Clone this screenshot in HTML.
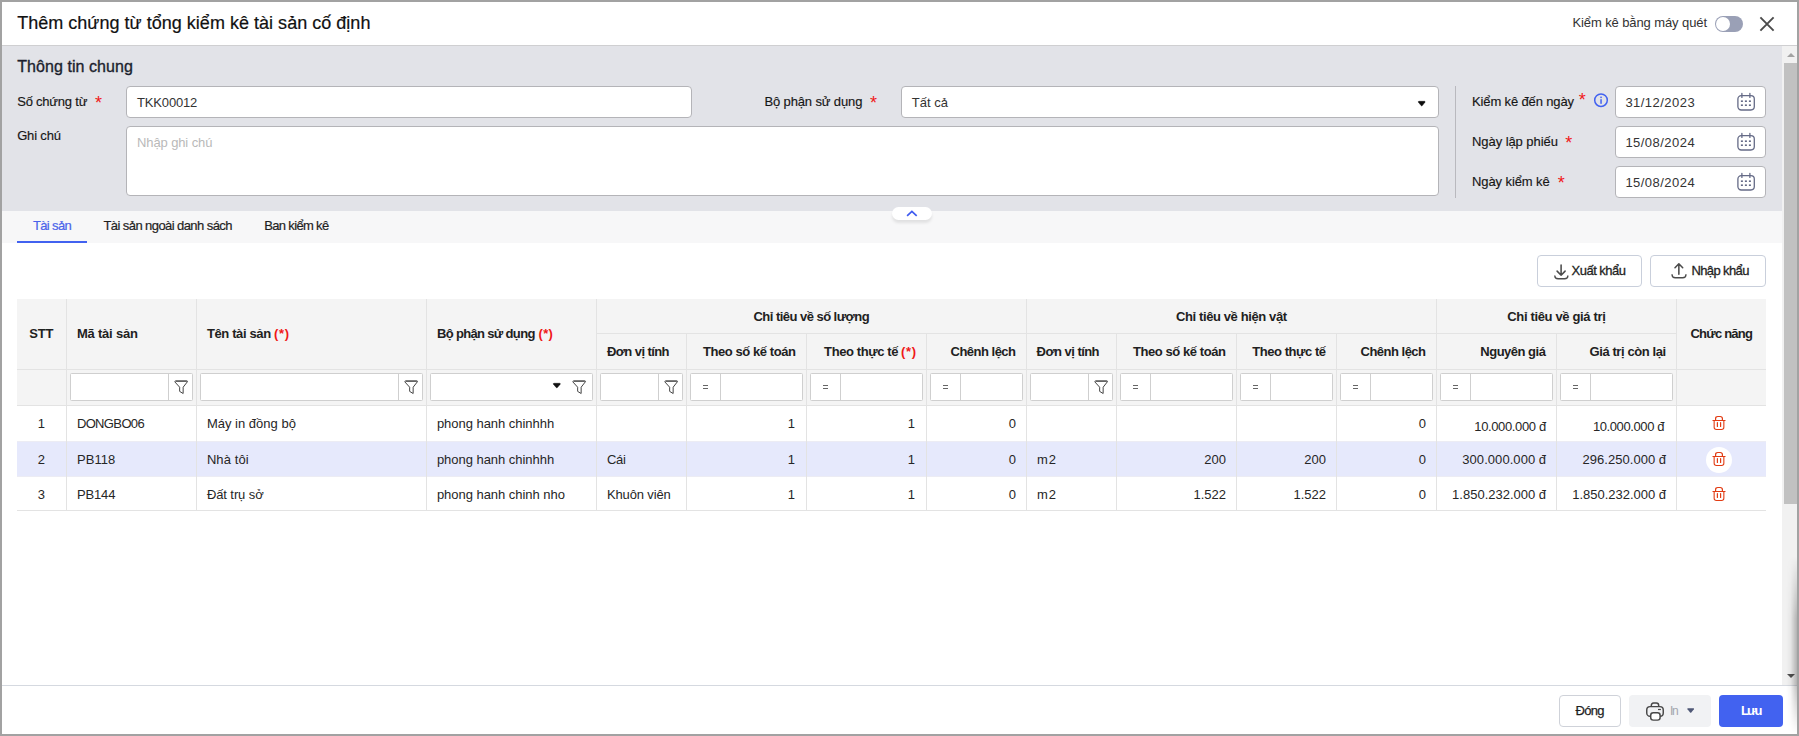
<!DOCTYPE html>
<html lang="vi">
<head>
<meta charset="utf-8">
<title>Thêm chứng từ tổng kiểm kê tài sản cố định</title>
<style>
*{box-sizing:border-box;margin:0;padding:0}
html,body{width:1799px;height:736px;overflow:hidden;background:#fff}
body{font-family:"Liberation Sans",sans-serif;font-size:13px;color:#212121;position:relative}
.abs,.t{position:absolute}
.t{white-space:nowrap;line-height:20px;height:20px}
.inp{position:absolute;background:#fff;border:1px solid #b4b4b8;border-radius:4px}
.flt{position:absolute;background:#fff;border:1px solid #cfcfcf;border-radius:1.5px}
.btn{position:absolute;background:#fff;border:1px solid #c9cfdb;border-radius:4px}
svg{overflow:visible}
</style>
</head>
<body>

<div class="abs" style="left:2px;top:2px;width:1795px;height:43px;background:#fff"></div>
<div class="abs" style="left:2px;top:45px;width:1780px;height:166px;background:#e2e3e8"></div>
<div class="abs" style="left:2px;top:211px;width:1780px;height:32px;background:#f7f7f8"></div>
<div class="abs" style="left:1782px;top:45px;width:15px;height:640px;background:#f1f1f1"></div>
<div class="abs" style="left:1784px;top:63px;width:13px;height:441px;background:#c1c1c1"></div>
<svg class="abs" style="left:1786.7px;top:53px;" width="8" height="4" viewBox="0 0 8 4"><path d="M0 4 L4 0 L8 4 Z" fill="#a3a3a3"/></svg>
<svg class="abs" style="left:1786.7px;top:674px;" width="8" height="4" viewBox="0 0 8 4"><path d="M0 0 L4 4 L8 0 Z" fill="#505050"/></svg>
<div class="abs" style="left:2px;top:685px;width:1795px;height:1px;background:#d5d9e0"></div>
<div class="abs" style="left:2px;top:45px;width:1795px;height:1px;background:#cfcfd1"></div>
<span class="t" style="left:17.20px;top:13.00px;font-size:18px;color:#111;letter-spacing:0.023px;-webkit-text-stroke:0.2px #111;">Thêm chứng từ tổng kiểm kê tài sản cố định</span>
<span class="t" style="left:1572.40px;top:12.50px;font-size:13px;color:#333;letter-spacing:-0.096px;">Kiểm kê bằng máy quét</span>
<div class="abs" style="left:1715px;top:16px;width:28px;height:16px;background:#9aa0b6;border-radius:8px"></div>
<div class="abs" style="left:1716px;top:17px;width:14px;height:14px;background:#fff;border-radius:7px"></div>
<svg class="abs" style="left:1760px;top:17px;" width="14" height="14" viewBox="0 0 14 14"><path d="M0.4 0.4 L13.6 13.6 M13.6 0.4 L0.4 13.6" stroke="#4b4b4b" stroke-width="1.9" fill="none"/></svg>
<span class="t" style="left:17.20px;top:57.00px;font-size:16px;color:#1c1f2e;letter-spacing:0.068px;-webkit-text-stroke:0.35px #1c1f2e;">Thông tin chung</span>
<span class="t" style="left:17.20px;top:91.80px;font-size:13px;color:#161616;letter-spacing:-0.217px;-webkit-text-stroke:0.15px #161616;">Số chứng từ</span>
<span class="t" style="left:94.90px;top:93.38px;font-size:18px;color:#f01818;">*</span>
<div class="inp" style="left:126px;top:86px;width:566px;height:32px"></div>
<span class="t" style="left:137.00px;top:92.50px;font-size:13px;color:#333;letter-spacing:-0.157px;">TKK00012</span>
<span class="t" style="left:17.20px;top:125.50px;font-size:13px;color:#161616;letter-spacing:-0.175px;-webkit-text-stroke:0.15px #161616;">Ghi chú</span>
<div class="inp" style="left:126px;top:126px;width:1313px;height:70px"></div>
<span class="t" style="left:137.00px;top:132.50px;font-size:13px;color:#b9b9b9;letter-spacing:-0.111px;">Nhập ghi chú</span>
<span class="t" style="left:764.40px;top:91.80px;font-size:13px;color:#161616;letter-spacing:-0.125px;-webkit-text-stroke:0.15px #161616;">Bộ phận sử dụng</span>
<span class="t" style="left:869.90px;top:93.38px;font-size:18px;color:#f01818;">*</span>
<div class="inp" style="left:901px;top:86px;width:538px;height:32px"></div>
<span class="t" style="left:911.70px;top:92.50px;font-size:13px;color:#333;letter-spacing:0.015px;">Tất cả</span>
<svg class="abs" style="left:1418px;top:100.9px;" width="7.4" height="5.2" viewBox="0 0 7.4 5.2"><path d="M0.9 0.3 H6.5 Q7.5 0.4 6.9 1.3 L4.3 4.6 Q3.7 5.2 3.1 4.6 L0.5 1.3 Q-0.1 0.4 0.9 0.3 Z" fill="#0c0c0c" stroke="#0c0c0c" stroke-width="0.5" stroke-linejoin="round"/></svg>
<div class="abs" style="left:1455px;top:86px;width:1px;height:112px;background:#b9b9be"></div>
<span class="t" style="left:1472.00px;top:91.80px;font-size:13px;color:#161616;letter-spacing:-0.135px;-webkit-text-stroke:0.15px #161616;">Kiểm kê đến ngày</span>
<span class="t" style="left:1578.80px;top:90.08px;font-size:18px;color:#f01818;">*</span>
<div class="inp" style="left:1615px;top:86px;width:151px;height:32px"></div>
<span class="t" style="left:1625.40px;top:92.50px;font-size:13px;color:#333;letter-spacing:0.464px;">31/12/2023</span>
<svg class="abs" style="left:1737px;top:93px;" width="18" height="18" viewBox="0 0 18 18"><rect x="0.9" y="2.7" width="16.4" height="14.3" rx="3.4" fill="none" stroke="#646a86" stroke-width="1.3"/><path d="M4.9 0.5 V4.4 M12.9 0.5 V4.4" stroke="#646a86" stroke-width="1.3" fill="none" stroke-linecap="round"/><g fill="#646a86"><rect x="3.9000000000000004" y="7.3999999999999995" width="2" height="1.6"/><rect x="7.9" y="7.3999999999999995" width="2" height="1.6"/><rect x="11.9" y="7.3999999999999995" width="2" height="1.6"/><rect x="3.9000000000000004" y="11.399999999999999" width="2" height="1.6"/><rect x="7.9" y="11.399999999999999" width="2" height="1.6"/><rect x="11.9" y="11.399999999999999" width="2" height="1.6"/></g></svg>
<span class="t" style="left:1472.00px;top:131.80px;font-size:13px;color:#161616;letter-spacing:-0.065px;-webkit-text-stroke:0.15px #161616;">Ngày lập phiếu</span>
<span class="t" style="left:1565.20px;top:133.07px;font-size:18px;color:#f01818;">*</span>
<div class="inp" style="left:1615px;top:126px;width:151px;height:32px"></div>
<span class="t" style="left:1625.40px;top:132.50px;font-size:13px;color:#333;letter-spacing:0.464px;">15/08/2024</span>
<svg class="abs" style="left:1737px;top:133px;" width="18" height="18" viewBox="0 0 18 18"><rect x="0.9" y="2.7" width="16.4" height="14.3" rx="3.4" fill="none" stroke="#646a86" stroke-width="1.3"/><path d="M4.9 0.5 V4.4 M12.9 0.5 V4.4" stroke="#646a86" stroke-width="1.3" fill="none" stroke-linecap="round"/><g fill="#646a86"><rect x="3.9000000000000004" y="7.3999999999999995" width="2" height="1.6"/><rect x="7.9" y="7.3999999999999995" width="2" height="1.6"/><rect x="11.9" y="7.3999999999999995" width="2" height="1.6"/><rect x="3.9000000000000004" y="11.399999999999999" width="2" height="1.6"/><rect x="7.9" y="11.399999999999999" width="2" height="1.6"/><rect x="11.9" y="11.399999999999999" width="2" height="1.6"/></g></svg>
<span class="t" style="left:1472.00px;top:171.80px;font-size:13px;color:#161616;letter-spacing:-0.095px;-webkit-text-stroke:0.15px #161616;">Ngày kiểm kê</span>
<span class="t" style="left:1557.70px;top:173.07px;font-size:18px;color:#f01818;">*</span>
<div class="inp" style="left:1615px;top:166px;width:151px;height:32px"></div>
<span class="t" style="left:1625.40px;top:172.50px;font-size:13px;color:#333;letter-spacing:0.464px;">15/08/2024</span>
<svg class="abs" style="left:1737px;top:173px;" width="18" height="18" viewBox="0 0 18 18"><rect x="0.9" y="2.7" width="16.4" height="14.3" rx="3.4" fill="none" stroke="#646a86" stroke-width="1.3"/><path d="M4.9 0.5 V4.4 M12.9 0.5 V4.4" stroke="#646a86" stroke-width="1.3" fill="none" stroke-linecap="round"/><g fill="#646a86"><rect x="3.9000000000000004" y="7.3999999999999995" width="2" height="1.6"/><rect x="7.9" y="7.3999999999999995" width="2" height="1.6"/><rect x="11.9" y="7.3999999999999995" width="2" height="1.6"/><rect x="3.9000000000000004" y="11.399999999999999" width="2" height="1.6"/><rect x="7.9" y="11.399999999999999" width="2" height="1.6"/><rect x="11.9" y="11.399999999999999" width="2" height="1.6"/></g></svg>
<svg class="abs" style="left:1594px;top:93px;" width="14" height="14" viewBox="0 0 14 14"><circle cx="7" cy="7.2" r="6.3" fill="none" stroke="#4262f0" stroke-width="1.5"/><rect x="6.3" y="6.2" width="1.5" height="4.6" fill="#4262f0"/><rect x="6.3" y="3.6" width="1.5" height="1.5" fill="#4262f0"/></svg>
<div class="abs" style="left:892px;top:206.6px;width:40px;height:13.4px;background:#fff;border-radius:6.7px;box-shadow:0 3px 3px rgba(0,0,0,.09)"></div>
<svg class="abs" style="left:906px;top:209.5px;" width="12" height="7" viewBox="0 0 12 7"><path d="M1.1 5.9 L5.9 1.4 L10.7 5.9" fill="none" stroke="#3f5bf0" stroke-width="1.7" stroke-linecap="butt" stroke-linejoin="miter"/></svg>
<span class="t" style="left:33.00px;top:216.00px;font-size:13px;color:#4a63ea;letter-spacing:-0.654px;-webkit-text-stroke:0.2px #4a63ea;">Tài sản</span>
<div class="abs" style="left:17px;top:241px;width:70px;height:2px;background:#4262f0"></div>
<span class="t" style="left:103.50px;top:216.00px;font-size:13px;color:#1f1f1f;letter-spacing:-0.578px;-webkit-text-stroke:0.2px #1f1f1f;">Tài sản ngoài danh sách</span>
<span class="t" style="left:264.30px;top:216.00px;font-size:13px;color:#1f1f1f;letter-spacing:-0.670px;-webkit-text-stroke:0.2px #1f1f1f;">Ban kiểm kê</span>
<div class="btn" style="left:1537px;top:255px;width:105px;height:32px"></div>
<svg class="abs" style="left:1554px;top:263.5px;" width="15" height="16" viewBox="0 0 15 16"><g fill="none" stroke="#4c4c4c" stroke-width="1.55" stroke-linecap="round" stroke-linejoin="round"><path d="M7.1 0.9 V11.2 M3.1 7.1 L7.1 11.3 L11.1 7.1"/><path d="M0.85 12 Q0.85 14.7 4.1 14.7 H10.6 Q13.85 14.7 13.85 12" stroke-width="1.35"/></g></svg>
<span class="t" style="left:1571.60px;top:260.50px;font-size:13px;color:#1f1f1f;letter-spacing:-0.525px;-webkit-text-stroke:0.3px #1f1f1f;">Xuất khẩu</span>
<div class="btn" style="left:1650px;top:255px;width:116px;height:32px"></div>
<svg class="abs" style="left:1671px;top:263px;" width="16" height="16" viewBox="0 0 16 16"><g fill="none" stroke="#4c4c4c" stroke-width="1.55" stroke-linecap="round" stroke-linejoin="round"><path d="M7.85 11.2 V0.9 M4 4.7 L7.85 0.8 L11.7 4.7"/><path d="M1.05 11.7 Q1.05 14.7 4.3 14.7 H11.7 Q14.95 14.7 14.95 11.7" stroke-width="1.35"/></g></svg>
<span class="t" style="left:1691.40px;top:260.50px;font-size:13px;color:#1f1f1f;letter-spacing:-0.609px;-webkit-text-stroke:0.3px #1f1f1f;">Nhập khẩu</span>
<div class="abs" style="left:17px;top:299px;width:1749px;height:106px;background:#f4f4f4"></div>
<div class="abs" style="left:17px;top:441px;width:1749px;height:36px;background:#e6e9fc;border-top:1px solid #ececf4;border-bottom:1px solid #ececf4"></div>
<div class="abs" style="left:596px;top:333px;width:1080px;height:1px;background:#e3e3e3"></div>
<div class="abs" style="left:17px;top:369px;width:1749px;height:1px;background:#e3e3e3"></div>
<div class="abs" style="left:17px;top:405px;width:1749px;height:1px;background:#e3e3e3"></div>
<div class="abs" style="left:17px;top:510px;width:1749px;height:1px;background:#e3e3e3"></div>
<div class="abs" style="left:66px;top:299px;width:1px;height:212px;background:#e3e3e3"></div>
<div class="abs" style="left:196px;top:299px;width:1px;height:212px;background:#e3e3e3"></div>
<div class="abs" style="left:426px;top:299px;width:1px;height:212px;background:#e3e3e3"></div>
<div class="abs" style="left:596px;top:299px;width:1px;height:212px;background:#e3e3e3"></div>
<div class="abs" style="left:686px;top:333px;width:1px;height:178px;background:#e3e3e3"></div>
<div class="abs" style="left:806px;top:333px;width:1px;height:178px;background:#e3e3e3"></div>
<div class="abs" style="left:926px;top:333px;width:1px;height:178px;background:#e3e3e3"></div>
<div class="abs" style="left:1026px;top:299px;width:1px;height:212px;background:#e3e3e3"></div>
<div class="abs" style="left:1116px;top:333px;width:1px;height:178px;background:#e3e3e3"></div>
<div class="abs" style="left:1236px;top:333px;width:1px;height:178px;background:#e3e3e3"></div>
<div class="abs" style="left:1336px;top:333px;width:1px;height:178px;background:#e3e3e3"></div>
<div class="abs" style="left:1436px;top:299px;width:1px;height:212px;background:#e3e3e3"></div>
<div class="abs" style="left:1556px;top:333px;width:1px;height:178px;background:#e3e3e3"></div>
<div class="abs" style="left:1676px;top:299px;width:1px;height:212px;background:#e3e3e3"></div>
<span class="t" style="left:29.30px;top:323.50px;font-size:13px;color:#212121;font-weight:700;letter-spacing:-0.200px;">STT</span>
<span class="t" style="left:76.90px;top:323.50px;font-size:13px;color:#212121;font-weight:700;letter-spacing:-0.208px;">Mã tài sản</span>
<span class="t" style="left:206.90px;top:323.50px;font-size:13px;color:#212121;font-weight:700;letter-spacing:-0.368px;">Tên tài sản</span>
<span class="t" style="left:274.10px;top:323.50px;font-size:13px;color:#f01818;font-weight:700;letter-spacing:0.625px;">(*)</span>
<span class="t" style="left:436.90px;top:323.50px;font-size:13px;color:#212121;font-weight:700;letter-spacing:-0.652px;">Bộ phận sử dụng</span>
<span class="t" style="left:538.60px;top:323.50px;font-size:13px;color:#f01818;font-weight:700;letter-spacing:0.275px;">(*)</span>
<span class="t" style="left:753.50px;top:306.80px;font-size:13px;color:#212121;font-weight:700;letter-spacing:-0.534px;">Chỉ tiêu về số lượng</span>
<span class="t" style="left:1176.00px;top:306.80px;font-size:13px;color:#212121;font-weight:700;letter-spacing:-0.389px;">Chỉ tiêu về hiện vật</span>
<span class="t" style="left:1507.30px;top:306.80px;font-size:13px;color:#212121;font-weight:700;letter-spacing:-0.347px;">Chỉ tiêu về giá trị</span>
<span class="t" style="left:1690.50px;top:323.50px;font-size:13px;color:#212121;font-weight:700;letter-spacing:-0.778px;">Chức năng</span>
<span class="t" style="left:606.90px;top:341.80px;font-size:13px;color:#212121;font-weight:700;letter-spacing:-0.580px;">Đơn vị tính</span>
<span class="t" style="left:702.90px;top:341.80px;font-size:13px;color:#212121;font-weight:700;letter-spacing:-0.414px;">Theo số kế toán</span>
<span class="t" style="left:824.10px;top:341.80px;font-size:13px;color:#212121;font-weight:700;letter-spacing:-0.405px;">Theo thực tế</span>
<span class="t" style="left:901.10px;top:341.80px;font-size:13px;color:#f01818;font-weight:700;letter-spacing:0.625px;">(*)</span>
<span class="t" style="left:950.50px;top:341.80px;font-size:13px;color:#212121;font-weight:700;letter-spacing:-0.503px;">Chênh lệch</span>
<span class="t" style="left:1036.60px;top:341.80px;font-size:13px;color:#212121;font-weight:700;letter-spacing:-0.550px;">Đơn vị tính</span>
<span class="t" style="left:1132.90px;top:341.80px;font-size:13px;color:#212121;font-weight:700;letter-spacing:-0.414px;">Theo số kế toán</span>
<span class="t" style="left:1252.30px;top:341.80px;font-size:13px;color:#212121;font-weight:700;letter-spacing:-0.450px;">Theo thực tế</span>
<span class="t" style="left:1360.50px;top:341.80px;font-size:13px;color:#212121;font-weight:700;letter-spacing:-0.503px;">Chênh lệch</span>
<span class="t" style="left:1480.30px;top:341.80px;font-size:13px;color:#212121;font-weight:700;letter-spacing:-0.494px;">Nguyên giá</span>
<span class="t" style="left:1589.50px;top:341.80px;font-size:13px;color:#212121;font-weight:700;letter-spacing:-0.412px;">Giá trị còn lại</span>
<div class="flt" style="left:70px;top:373px;width:123px;height:28px"></div>
<div class="abs" style="left:168px;top:374px;width:1px;height:26px;background:#cfcfcf"></div>
<svg class="abs" style="left:174.3px;top:379.8px;" width="14" height="14" viewBox="0 0 14 14"><path d="M1.7 0.9 H12.9 Q13.9 1 13.3 1.9 L9.15 7.2 V13.5 L5.65 11.4 V7.2 L0.95 2 Q0.5 1 1.7 0.9 Z" fill="none" stroke="#454545" stroke-width="1" stroke-linejoin="round"/><path d="M2 1.3 H12.8" fill="none" stroke="#454545" stroke-width="0.9"/></svg>
<div class="flt" style="left:200px;top:373px;width:223px;height:28px"></div>
<div class="abs" style="left:398px;top:374px;width:1px;height:26px;background:#cfcfcf"></div>
<svg class="abs" style="left:404.3px;top:379.8px;" width="14" height="14" viewBox="0 0 14 14"><path d="M1.7 0.9 H12.9 Q13.9 1 13.3 1.9 L9.15 7.2 V13.5 L5.65 11.4 V7.2 L0.95 2 Q0.5 1 1.7 0.9 Z" fill="none" stroke="#454545" stroke-width="1" stroke-linejoin="round"/><path d="M2 1.3 H12.8" fill="none" stroke="#454545" stroke-width="0.9"/></svg>
<div class="flt" style="left:430px;top:373px;width:163px;height:28px"></div>
<svg class="abs" style="left:572.3px;top:379.8px;" width="14" height="14" viewBox="0 0 14 14"><path d="M1.7 0.9 H12.9 Q13.9 1 13.3 1.9 L9.15 7.2 V13.5 L5.65 11.4 V7.2 L0.95 2 Q0.5 1 1.7 0.9 Z" fill="none" stroke="#454545" stroke-width="1" stroke-linejoin="round"/><path d="M2 1.3 H12.8" fill="none" stroke="#454545" stroke-width="0.9"/></svg>
<svg class="abs" style="left:552.6px;top:382.9px;" width="7.6" height="5" viewBox="0 0 7.6 5"><path d="M0.9 0.3 H6.7 Q7.7 0.4 7.1 1.3 L4.4 4.5 Q3.8 5 3.2 4.5 L0.5 1.3 Q-0.1 0.4 0.9 0.3 Z" fill="#111" stroke="#111" stroke-width="0.5" stroke-linejoin="round"/></svg>
<div class="flt" style="left:600px;top:373px;width:83px;height:28px"></div>
<div class="abs" style="left:658px;top:374px;width:1px;height:26px;background:#cfcfcf"></div>
<svg class="abs" style="left:664.3px;top:379.8px;" width="14" height="14" viewBox="0 0 14 14"><path d="M1.7 0.9 H12.9 Q13.9 1 13.3 1.9 L9.15 7.2 V13.5 L5.65 11.4 V7.2 L0.95 2 Q0.5 1 1.7 0.9 Z" fill="none" stroke="#454545" stroke-width="1" stroke-linejoin="round"/><path d="M2 1.3 H12.8" fill="none" stroke="#454545" stroke-width="0.9"/></svg>
<div class="flt" style="left:690px;top:373px;width:113px;height:28px"></div>
<div class="abs" style="left:720px;top:374px;width:1px;height:26px;background:#cfcfcf"></div>
<div class="abs" style="left:702.8px;top:385.0px;width:5.7px;height:1px;background:#666"></div>
<div class="abs" style="left:702.8px;top:387.6px;width:5.7px;height:1px;background:#666"></div>
<div class="flt" style="left:810px;top:373px;width:113px;height:28px"></div>
<div class="abs" style="left:840px;top:374px;width:1px;height:26px;background:#cfcfcf"></div>
<div class="abs" style="left:822.8px;top:385.0px;width:5.7px;height:1px;background:#666"></div>
<div class="abs" style="left:822.8px;top:387.6px;width:5.7px;height:1px;background:#666"></div>
<div class="flt" style="left:930px;top:373px;width:93px;height:28px"></div>
<div class="abs" style="left:960px;top:374px;width:1px;height:26px;background:#cfcfcf"></div>
<div class="abs" style="left:942.8px;top:385.0px;width:5.7px;height:1px;background:#666"></div>
<div class="abs" style="left:942.8px;top:387.6px;width:5.7px;height:1px;background:#666"></div>
<div class="flt" style="left:1030px;top:373px;width:83px;height:28px"></div>
<div class="abs" style="left:1088px;top:374px;width:1px;height:26px;background:#cfcfcf"></div>
<svg class="abs" style="left:1094.3px;top:379.8px;" width="14" height="14" viewBox="0 0 14 14"><path d="M1.7 0.9 H12.9 Q13.9 1 13.3 1.9 L9.15 7.2 V13.5 L5.65 11.4 V7.2 L0.95 2 Q0.5 1 1.7 0.9 Z" fill="none" stroke="#454545" stroke-width="1" stroke-linejoin="round"/><path d="M2 1.3 H12.8" fill="none" stroke="#454545" stroke-width="0.9"/></svg>
<div class="flt" style="left:1120px;top:373px;width:113px;height:28px"></div>
<div class="abs" style="left:1150px;top:374px;width:1px;height:26px;background:#cfcfcf"></div>
<div class="abs" style="left:1132.8px;top:385.0px;width:5.7px;height:1px;background:#666"></div>
<div class="abs" style="left:1132.8px;top:387.6px;width:5.7px;height:1px;background:#666"></div>
<div class="flt" style="left:1240px;top:373px;width:93px;height:28px"></div>
<div class="abs" style="left:1270px;top:374px;width:1px;height:26px;background:#cfcfcf"></div>
<div class="abs" style="left:1252.8px;top:385.0px;width:5.7px;height:1px;background:#666"></div>
<div class="abs" style="left:1252.8px;top:387.6px;width:5.7px;height:1px;background:#666"></div>
<div class="flt" style="left:1340px;top:373px;width:93px;height:28px"></div>
<div class="abs" style="left:1370px;top:374px;width:1px;height:26px;background:#cfcfcf"></div>
<div class="abs" style="left:1352.8px;top:385.0px;width:5.7px;height:1px;background:#666"></div>
<div class="abs" style="left:1352.8px;top:387.6px;width:5.7px;height:1px;background:#666"></div>
<div class="flt" style="left:1440px;top:373px;width:113px;height:28px"></div>
<div class="abs" style="left:1470px;top:374px;width:1px;height:26px;background:#cfcfcf"></div>
<div class="abs" style="left:1452.8px;top:385.0px;width:5.7px;height:1px;background:#666"></div>
<div class="abs" style="left:1452.8px;top:387.6px;width:5.7px;height:1px;background:#666"></div>
<div class="flt" style="left:1560px;top:373px;width:113px;height:28px"></div>
<div class="abs" style="left:1590px;top:374px;width:1px;height:26px;background:#cfcfcf"></div>
<div class="abs" style="left:1572.8px;top:385.0px;width:5.7px;height:1px;background:#666"></div>
<div class="abs" style="left:1572.8px;top:387.6px;width:5.7px;height:1px;background:#666"></div>
<span class="t" style="left:37.67px;top:413.50px;font-size:13px;color:#262626;">1</span>
<span class="t" style="left:76.90px;top:413.50px;font-size:13px;color:#262626;letter-spacing:-0.636px;">DONGBO06</span>
<span class="t" style="left:206.90px;top:413.50px;font-size:13px;color:#262626;letter-spacing:0.010px;">Máy in đồng bộ</span>
<span class="t" style="left:436.90px;top:413.50px;font-size:13px;color:#262626;letter-spacing:-0.034px;">phong hanh chinhhh</span>
<span class="t" style="left:787.75px;top:413.50px;font-size:13px;color:#262626;">1</span>
<span class="t" style="left:907.75px;top:413.50px;font-size:13px;color:#262626;">1</span>
<span class="t" style="left:1008.65px;top:413.50px;font-size:13px;color:#262626;">0</span>
<span class="t" style="left:1418.65px;top:413.50px;font-size:13px;color:#262626;">0</span>
<span class="t" style="left:1474.30px;top:416.80px;font-size:13px;color:#262626;letter-spacing:-0.370px;">10.000.000 đ</span>
<span class="t" style="left:1592.90px;top:416.80px;font-size:13px;color:#262626;letter-spacing:-0.398px;">10.000.000 đ</span>
<span class="t" style="left:37.67px;top:449.90px;font-size:13px;color:#262626;">2</span>
<span class="t" style="left:76.90px;top:449.90px;font-size:13px;color:#262626;letter-spacing:0.094px;">PB118</span>
<span class="t" style="left:206.90px;top:449.90px;font-size:13px;color:#262626;letter-spacing:0.092px;">Nhà tôi</span>
<span class="t" style="left:436.90px;top:449.90px;font-size:13px;color:#262626;letter-spacing:-0.034px;">phong hanh chinhhh</span>
<span class="t" style="left:607.00px;top:449.90px;font-size:13px;color:#262626;letter-spacing:-0.350px;">Cái</span>
<span class="t" style="left:787.75px;top:449.90px;font-size:13px;color:#262626;">1</span>
<span class="t" style="left:907.75px;top:449.90px;font-size:13px;color:#262626;">1</span>
<span class="t" style="left:1008.65px;top:449.90px;font-size:13px;color:#262626;">0</span>
<span class="t" style="left:1036.90px;top:449.90px;font-size:13px;color:#262626;letter-spacing:1.000px;">m2</span>
<span class="t" style="left:1204.25px;top:449.90px;font-size:13px;color:#262626;">200</span>
<span class="t" style="left:1304.25px;top:449.90px;font-size:13px;color:#262626;">200</span>
<span class="t" style="left:1418.65px;top:449.90px;font-size:13px;color:#262626;">0</span>
<span class="t" style="left:1462.30px;top:449.90px;font-size:13px;color:#262626;letter-spacing:0.056px;">300.000.000 đ</span>
<span class="t" style="left:1582.40px;top:449.90px;font-size:13px;color:#262626;letter-spacing:0.048px;">296.250.000 đ</span>
<span class="t" style="left:37.67px;top:484.50px;font-size:13px;color:#262626;">3</span>
<span class="t" style="left:76.90px;top:484.50px;font-size:13px;color:#262626;letter-spacing:-0.125px;">PB144</span>
<span class="t" style="left:206.90px;top:484.50px;font-size:13px;color:#262626;letter-spacing:-0.092px;">Đất trụ sở</span>
<span class="t" style="left:436.90px;top:484.50px;font-size:13px;color:#262626;letter-spacing:-0.033px;">phong hanh chinh nho</span>
<span class="t" style="left:607.00px;top:484.50px;font-size:13px;color:#262626;letter-spacing:-0.144px;">Khuôn viên</span>
<span class="t" style="left:787.75px;top:484.50px;font-size:13px;color:#262626;">1</span>
<span class="t" style="left:907.75px;top:484.50px;font-size:13px;color:#262626;">1</span>
<span class="t" style="left:1008.65px;top:484.50px;font-size:13px;color:#262626;">0</span>
<span class="t" style="left:1036.90px;top:484.50px;font-size:13px;color:#262626;letter-spacing:1.000px;">m2</span>
<span class="t" style="left:1193.50px;top:484.50px;font-size:13px;color:#262626;">1.522</span>
<span class="t" style="left:1293.50px;top:484.50px;font-size:13px;color:#262626;">1.522</span>
<span class="t" style="left:1418.65px;top:484.50px;font-size:13px;color:#262626;">0</span>
<span class="t" style="left:1452.10px;top:484.50px;font-size:13px;color:#262626;">1.850.232.000 đ</span>
<span class="t" style="left:1572.20px;top:484.50px;font-size:13px;color:#262626;letter-spacing:-0.007px;">1.850.232.000 đ</span>
<div class="abs" style="left:1706px;top:446.8px;width:26px;height:26px;background:#fff;border-radius:13px"></div>
<svg class="abs" style="left:1712px;top:415.1px;" width="14" height="15" viewBox="0 0 14 15"><g fill="none" stroke="#e23c14" stroke-width="1.2" stroke-linecap="round" stroke-linejoin="round"><path d="M0.5 5.5 H13.5" stroke-width="1.05" stroke-linecap="butt"/><path d="M3.6 5.4 V3.6 Q3.6 1.5 5.8 1.5 H8.2 Q10.4 1.5 10.4 3.6 V5.4"/><path d="M2.15 5.6 V12.3 Q2.15 14.45 4.45 14.45 H9.55 Q11.85 14.45 11.85 12.3 V5.6" stroke-width="1.1"/><path d="M5.4 7.6 V11.5 M8.6 7.6 V11.5"/></g></svg>
<svg class="abs" style="left:1712px;top:451.0px;" width="14" height="15" viewBox="0 0 14 15"><g fill="none" stroke="#e23c14" stroke-width="1.2" stroke-linecap="round" stroke-linejoin="round"><path d="M0.5 5.5 H13.5" stroke-width="1.05" stroke-linecap="butt"/><path d="M3.6 5.4 V3.6 Q3.6 1.5 5.8 1.5 H8.2 Q10.4 1.5 10.4 3.6 V5.4"/><path d="M2.15 5.6 V12.3 Q2.15 14.45 4.45 14.45 H9.55 Q11.85 14.45 11.85 12.3 V5.6" stroke-width="1.1"/><path d="M5.4 7.6 V11.5 M8.6 7.6 V11.5"/></g></svg>
<svg class="abs" style="left:1712px;top:486.3px;" width="14" height="15" viewBox="0 0 14 15"><g fill="none" stroke="#e23c14" stroke-width="1.2" stroke-linecap="round" stroke-linejoin="round"><path d="M0.5 5.5 H13.5" stroke-width="1.05" stroke-linecap="butt"/><path d="M3.6 5.4 V3.6 Q3.6 1.5 5.8 1.5 H8.2 Q10.4 1.5 10.4 3.6 V5.4"/><path d="M2.15 5.6 V12.3 Q2.15 14.45 4.45 14.45 H9.55 Q11.85 14.45 11.85 12.3 V5.6" stroke-width="1.1"/><path d="M5.4 7.6 V11.5 M8.6 7.6 V11.5"/></g></svg>
<div class="btn" style="left:1559px;top:695px;width:62px;height:32px;border-color:#cfd2d9"></div>
<span class="t" style="left:1575.50px;top:701.00px;font-size:13px;color:#1f1f1f;letter-spacing:-0.675px;-webkit-text-stroke:0.25px #1f1f1f;">Đóng</span>
<div class="abs" style="left:1629px;top:695px;width:82px;height:32px;background:#f1f2f4;border-radius:4px"></div>
<svg class="abs" style="left:1646px;top:702px;" width="18" height="19" viewBox="0 0 18 19"><g fill="none" stroke="#474747" stroke-width="1.45" stroke-linejoin="round"><path d="M5.3 4.5 V3.4 Q5.3 1.05 7.6 1.05 H10.4 Q12.7 1.05 12.7 3.4 V4.5"/><rect x="0.75" y="4.6" width="16.5" height="9.7" rx="3.3"/><rect x="4.7" y="10.8" width="9.4" height="7.3" rx="2.6" fill="#fff"/></g><rect x="12" y="6.9" width="2.9" height="1.2" fill="#474747"/></svg>
<span class="t" style="left:1670.00px;top:700.80px;font-size:12px;color:#a3a6ae;letter-spacing:-1.300px;">In</span>
<svg class="abs" style="left:1686.9px;top:708px;" width="7.4" height="5" viewBox="0 0 7.4 5"><path d="M0.9 0.3 H6.5 Q7.5 0.4 6.9 1.3 L4.3 4.5 Q3.7 5 3.1 4.5 L0.5 1.3 Q-0.1 0.4 0.9 0.3 Z" fill="#4f5876"/></svg>
<div class="abs" style="left:1719px;top:695px;width:64px;height:32px;background:#4262f0;border-radius:4px"></div>
<span class="t" style="left:1741.10px;top:701.00px;font-size:13px;color:#fff;font-weight:700;letter-spacing:-1.975px;">Lưu</span>
<div class="abs" style="left:1786px;top:556px;width:11px;height:178px;background:linear-gradient(90deg,rgba(0,0,0,0) 0%,rgba(0,0,0,.04) 40%,rgba(0,0,0,.26) 100%);-webkit-mask-image:linear-gradient(180deg,transparent 0%,#000 35%,#000 72%,transparent 100%);mask-image:linear-gradient(180deg,transparent 0%,#000 35%,#000 72%,transparent 100%)"></div>
<div class="abs" style="left:0px;top:0px;width:2px;height:736px;background:#a2a2a2"></div>
<div class="abs" style="left:0px;top:0px;width:1799px;height:2px;background:#a2a2a2"></div>
<div class="abs" style="left:1797px;top:0px;width:2px;height:736px;background:#a2a2a2"></div>
<div class="abs" style="left:0px;top:734px;width:1799px;height:2px;background:#a2a2a2"></div>
</body>
</html>
